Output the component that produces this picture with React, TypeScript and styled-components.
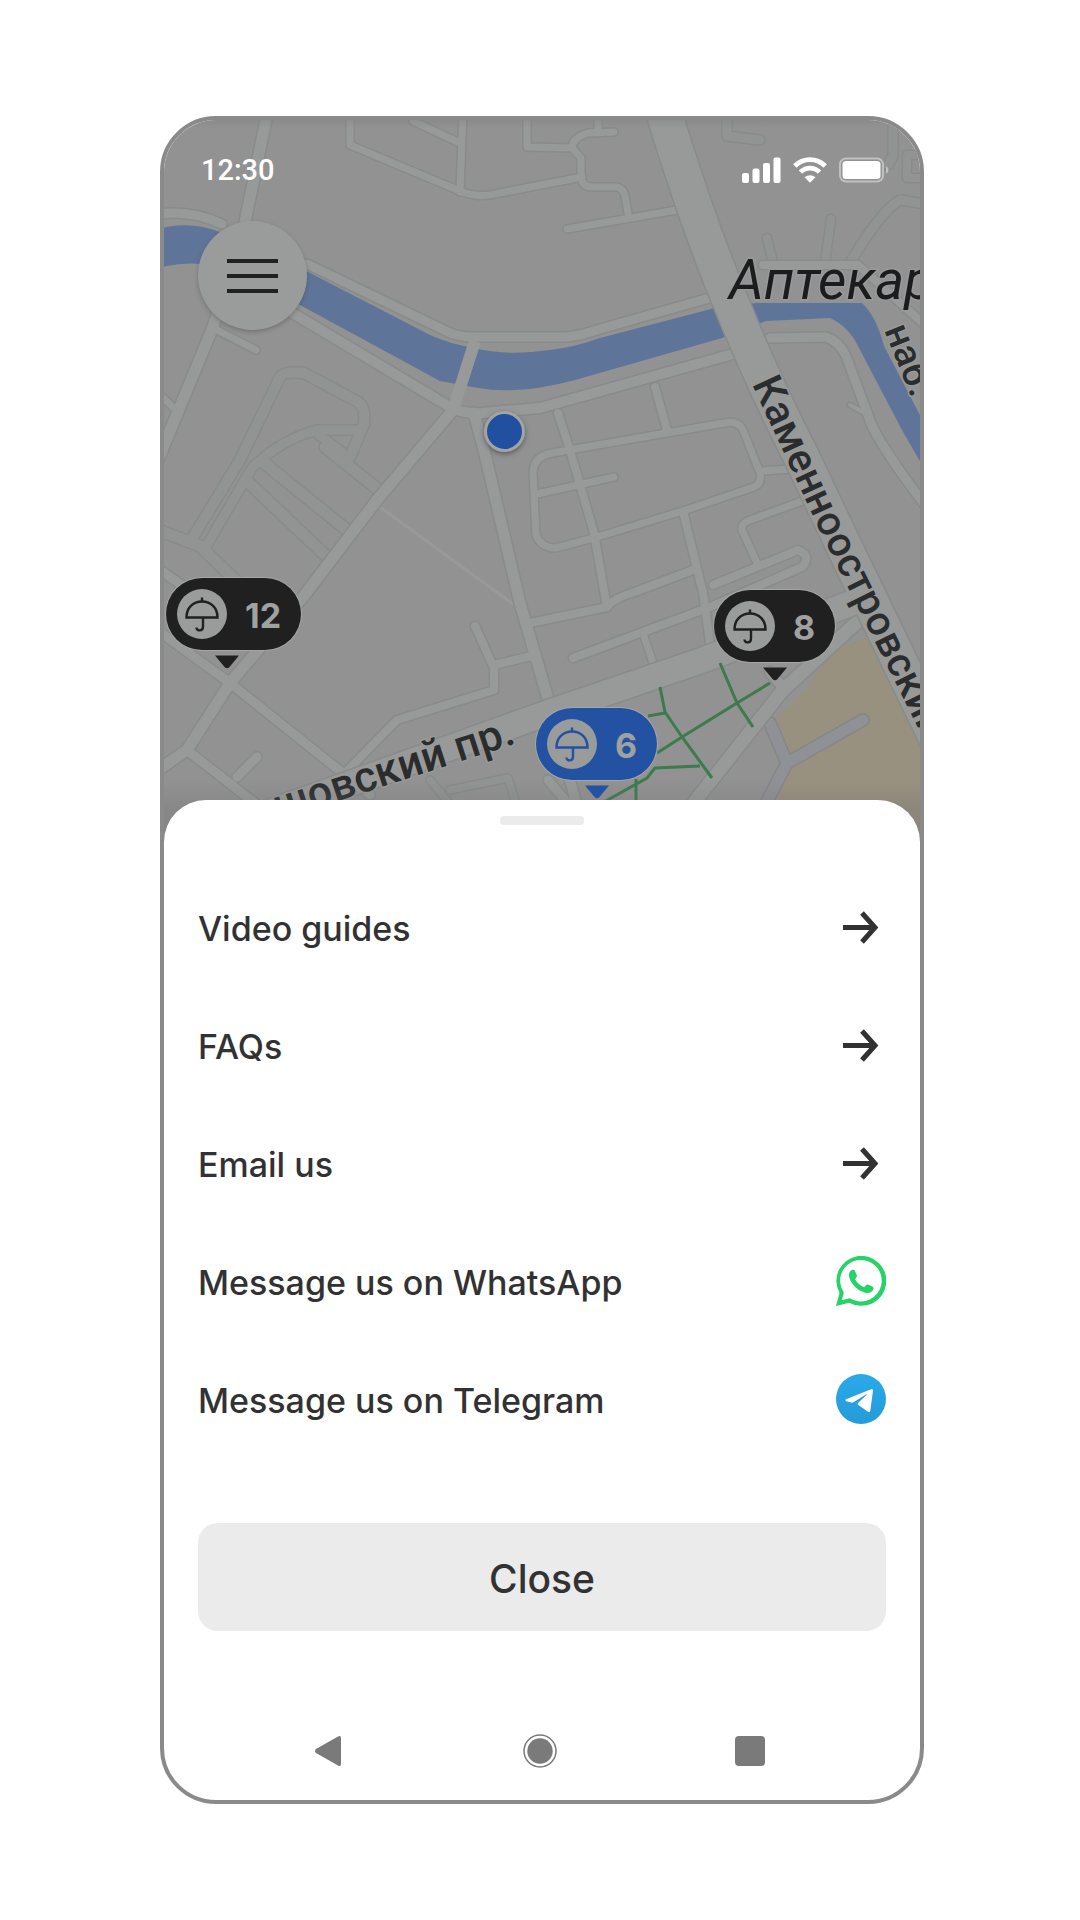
import React from "react";
import styled, { createGlobalStyle } from "styled-components";

const GlobalStyle = createGlobalStyle`
  *, *::before, *::after { box-sizing: border-box; }
  body { margin: 0; background: #fff; }
  button { font: inherit; color: inherit; border: 0; padding: 0; background: none; cursor: pointer; }
  a { color: inherit; text-decoration: none; }
  svg { display: block; }
`;

const Page = styled.main`
  padding: 116px 156px 116px 160px;
  font-family: Inter, "Liberation Sans", sans-serif;
  color: #323233;
`;

const Phone = styled.div`
  display: flex;
  flex-direction: column;
  overflow: hidden;
  border: 4px solid #8a8a8a;
  border-radius: 56px;
  background: #fff;
`;

const MapArea = styled.section`
  position: relative;
  height: 724px;
`;

const MapLayer = styled.div`
  position: absolute;
  inset: 0;
  overflow: hidden;
  background: #919291;
`;

const MapDrawing = styled.svg`
  width: 100%;
  height: 100%;
`;

const MapShade = styled.div`
  position: absolute;
  inset: 0;
  background: linear-gradient(rgba(120, 120, 120, 0.3), transparent 8px, transparent 660px, rgba(110, 110, 110, 0.3) 690px);
`;

const StatusBar = styled.header`
  position: relative;
  display: flex;
  align-items: center;
  justify-content: space-between;
  height: 101px;
  padding: 0 31px 2px 37px;
  color: #fff;
`;

const Time = styled.time`
  font: 500 29px/34px Roboto, "Liberation Sans", sans-serif;
`;

const StatusIcons = styled.div`
  display: flex;
  align-items: center;
  gap: 12px;
`;

const MenuButton = styled.button`
  position: relative;
  display: flex;
  flex-direction: column;
  align-items: center;
  justify-content: center;
  gap: 11px;
  width: 109px;
  height: 109px;
  margin-left: 34px;
  border-radius: 50%;
  background: #9a9b9b;
  box-shadow: 0 2px 4px rgba(60, 60, 60, 0.35);
`;

const MenuLine = styled.span`
  width: 51px;
  height: 4px;
  background: #202121;
`;

const Pin = styled.button<{ $x: number; $y: number; $tone: string }>`
  position: absolute;
  left: ${(p) => p.$x}px;
  top: ${(p) => p.$y}px;
  display: flex;
  align-items: center;
  gap: 18px;
  height: 72px;
  padding: 0 20px 0 11px;
  border-radius: 36px;
  background: ${(p) => p.$tone};
  box-shadow: 0 0 0 1px #a4a5a5;
  color: ${(p) => p.$tone};
`;

const PinIcon = styled.span`
  width: 50px;
  height: 50px;
  border-radius: 50%;
  background: #9a9b9b;
`;

const PinCount = styled.span`
  font-size: 34px;
  font-weight: 700;
  line-height: 40px;
  padding-top: 4px;
  color: #a0a1a1;
`;

const PinTip = styled.svg`
  position: absolute;
  left: 49px;
  top: 77px;
`;

const Position = styled.span`
  position: absolute;
  left: 320px;
  top: 291px;
  width: 41px;
  height: 41px;
  border: 3px solid #a3a4a4;
  border-radius: 50%;
  background: #2150a0;
  box-shadow: 0 2px 5px rgba(40, 40, 40, 0.5);
`;

const Sheet = styled.section`
  position: relative;
  display: flex;
  flex-direction: column;
  margin-top: -44px;
  padding: 16px 34px 0;
  border-radius: 42px 42px 0 0;
  background: #fff;
`;

const Handle = styled.span`
  align-self: center;
  width: 84px;
  height: 9px;
  border-radius: 4px;
  background: #ebebeb;
`;

const Links = styled.nav`
  display: flex;
  flex-direction: column;
  padding: 43px 0 65px;
`;

const LinkRow = styled.a`
  display: flex;
  align-items: center;
  justify-content: space-between;
  height: 118px;
`;

const LinkLabel = styled.span`
  font-size: 34px;
  font-weight: 500;
  line-height: 40px;
  padding-top: 4px;
`;

const CloseButton = styled.button`
  height: 108px;
  border-radius: 20px;
  background: #ebebeb;
  font-size: 39px;
  font-weight: 500;
  line-height: 48px;
  padding-top: 4px;
`;

const SystemBar = styled.footer`
  display: flex;
  align-items: center;
  justify-content: space-between;
  height: 98px;
  margin-top: 71px;
  padding: 0 155px 0 151px;
`;

const SystemButton = styled.button`
  display: block;
`;

type Road = { d: string; w: number };

const roads: Road[] = [
  { d: "M268 110L245 222L213 327L158 460", w: 11 },
  { d: "M350 110V145L460 191Q480 199 500 193L582 177", w: 7 },
  { d: "M413 121L460 143M463 110L460 192", w: 7 },
  { d: "M527 110V147L573 148M614 132L588 133Q572 138 572 148L581 158V178Q583 187 592 187H617Q624 189 625 196L628 213M598 110V132", w: 7 },
  { d: "M567 229L677 210", w: 7 },
  { d: "M158 214Q192 210 222 224M307 264L448 332Q458 337 474 337H566Q580 336 600 329L720 295", w: 9 },
  { d: "M284 308L450 407Q462 414 482 413L540 408L740 352", w: 10 },
  { d: "M770 338L826 337Q840 342 846 356L868 415Q874 438 925 505", w: 9 },
  { d: "M868 415L850 405", w: 4 },
  { d: "M453 410L377 500L303 597L230 683L187 750L158 770", w: 11 },
  { d: "M474 413L484 450L520 603L550 706", w: 11 },
  { d: "M475 626L494 668V690L397 720L347 771M494 665L535 655", w: 8 },
  { d: "M160 570L210 605M160 632L230 683L370 795M187 750L270 815M237 777L257 757M548 780L590 830", w: 9 },
  { d: "M217 330L256 350M160 395L174 408", w: 7 },
  { d: "M536 535L533 472Q534 456 552 453L724 423Q738 420 743 430L760 473Q762 484 754 487L683 511L597 537L556 548Q541 548 536 535", w: 7 },
  { d: "M760 471L792 469M537 494L614 477", w: 7 },
  { d: "M558 413L570 450L594 533L607 607M655 387L667 430M683 511L703 593L711 650", w: 8 },
  { d: "M530 623L607 607Q614 598 632 593L693 570", w: 8 },
  { d: "M573 658L710 607L802 567Q812 556 798 550L713 585", w: 8 },
  { d: "M757 563L742 530Q741 523 750 520L805 500M643 633L656 672", w: 7 },
  { d: "M763 265H858L925 325", w: 8 },
  { d: "M692 805L783 690L830 647L868 612", w: 13 },
  { d: "M770 672L785 690M570 780L578 810", w: 10 },
];

const lanes: Road[] = [
  { d: "M190 542L240 460L280 377Q284 371 304 373L358 402Q366 408 364 424L347 464", w: 10 },
  { d: "M204 550L252 468Q280 440 317 430H360M319 435L342 452", w: 9 },
  { d: "M248 482L325 555M264 463L347 530M325 447L380 491M158 530L200 546L235 580", w: 11 },
  { d: "M727 110V136L760 140M893 110V156L888 165M850 263Q880 212 900 200L925 204", w: 9 },
  { d: "M831 219L825 263M767 238L773 263M915 155H907V178H920", w: 8 },
  { d: "M430 780L455 810M450 790L508 778L515 800", w: 7 },
];

const avenues: Road[] = [
  { d: "M663 110Q700 230 732 305Q762 380 803 460Q850 560 945 755", w: 35 },
  { d: "M262 815L550 712L700 661L865 598", w: 25 },
];

const greenPaths =
  "M720 663L737 703L753 727M770 683L737 703L682 737L657 753M660 687L665 712L682 737L712 778M648 716L665 713M604 802L647 778L655 768L700 766M636 779V810";

function RoadSet({ items, fill }: { items: Road[]; fill: string }) {
  return (
    <g fill="none" strokeLinejoin="round" strokeLinecap="round">
      {items.map((r) => (
        <path key={"c" + r.d} d={r.d} stroke="#888b8b" strokeWidth={r.w + 3} />
      ))}
      {items.map((r) => (
        <path key={"f" + r.d} d={r.d} stroke={fill} strokeWidth={r.w} />
      ))}
    </g>
  );
}

function CityMap() {
  return (
    <MapDrawing viewBox="164 120 756 724" preserveAspectRatio="xMidYMin slice" aria-hidden="true">
      <path d="M870 636L833 650L806 689L770 723L785 757L768 850H930V728L880 640Z" fill="#999180" />
      <g fill="none" strokeLinecap="round" strokeLinejoin="round">
        <path d="M863 720L787 763L760 815M770 723L787 763" stroke="#858685" strokeWidth="14" />
        <path d="M863 720L787 763L760 815M770 723L787 763" stroke="#909196" strokeWidth="11" />
      </g>
      <RoadSet items={lanes} fill="#929494" />
      <path d="M380 507L517 607" stroke="#989999" strokeWidth="3" />
      <path
        d="M158 229Q190 220 220 232L310 273L430 335Q450 344 478 349Q510 356 550 350Q575 347 600 338L715 308L757 303L862 303Q876 316 884 346L925 425V470L902 430L858 346Q848 326 830 318L766 321L722 338L575 380Q520 395 478 388L440 381L300 305L215 266Q190 260 158 268Z"
        fill="#5f7499"
      />
      <RoadSet items={roads} fill="#989a99" />
      <path d="M475 341L453 410" stroke="#989a99" strokeWidth="12" />
      <RoadSet items={avenues} fill="#989a99" />
      <path d={greenPaths} fill="none" stroke="#3c7b4c" strokeWidth="3" />
      <defs>
        <path id="avenue-line" d="M752 384Q780 445 819 529Q860 612 900 692L960 812" />
      </defs>
      <g fontFamily='Roboto, "Noto Sans", sans-serif' fill="#2a2c2d" stroke="#989a99" strokeWidth="3" paintOrder="stroke">
        <text x="729" y="299" fontSize="55" fontStyle="italic" fill="#1a1c1d">
          Аптекарский
        </text>
        <text fontSize="41" fontWeight="500">
          <textPath href="#avenue-line">Каменноостровский</textPath>
        </text>
        <text fontSize="43" fontWeight="500" textAnchor="end" transform="translate(517 743) rotate(-18)">
          Левашовский пр.
        </text>
        <text fontSize="38" fontWeight="500" transform="translate(884 330) rotate(68)">
          наб.
        </text>
      </g>
    </MapDrawing>
  );
}

function Umbrella() {
  return (
    <svg width="50" height="50" viewBox="0 0 50 50" fill="none" stroke="currentColor" strokeWidth="2.4" aria-hidden="true">
      <path d="M9.5 28.5C9.5 19 16 12.5 25 12.5S40.500 19 40.500 28.500Z" />
      <path d="M25 12.500V8.500M26 28.500V37.500C26 42.500 19.500 42.500 19.500 38.500" />
    </svg>
  );
}

function MapPin({ x, y, tone, count }: { x: number; y: number; tone: string; count: number }) {
  return (
    <Pin type="button" $x={x} $y={y} $tone={tone} aria-label={`${count} umbrellas`}>
      <PinIcon>
        <Umbrella />
      </PinIcon>
      <PinCount>{count}</PinCount>
      <PinTip width="24" height="14" viewBox="0 0 24 14" aria-hidden="true">
        <path d="M0 0.500H24L14.500 12Q12 14.500 9.500 12Z" fill={tone} />
      </PinTip>
    </Pin>
  );
}

function Arrow() {
  return (
    <svg width="50" height="50" viewBox="0 0 50 50" fill="none" stroke="#323233" strokeWidth="5" aria-hidden="true">
      <path d="M7 25.500H38M26 11L39 25.500L26 40" />
    </svg>
  );
}

function WhatsApp() {
  return (
    <svg width="50" height="50" viewBox="0 0 50 50" aria-hidden="true">
      <path
        fillRule="evenodd"
        fill="#25d366"
        d="M0 50L3.500 37A25 25 0 1 1 13.200 46.700ZM5.800 44.300L13.700 42.200A20.800 20.800 0 1 0 7.800 36.500Z"
      />
      <path
        fill="#25d366"
        d="M15.200 14.200C16.200 13.400 18.200 13.500 18.800 14.700L20.900 19.300C21.400 20.700 19.800 22.200 19 23.200C21 26.800 24 29.600 28 31.300C29.300 30.300 30.300 28.300 31.800 28.500C33.300 28.800 35.500 30.100 37 31C38.300 31.900 37 34.400 35.700 35.500C33.300 37.400 30.300 37.300 27.300 36.100C20.600 33.500 15.700 28.200 13.500 22.200C12.500 19 12.800 16.100 15.200 14.200Z"
      />
    </svg>
  );
}

function Telegram() {
  return (
    <svg width="50" height="50" viewBox="0 0 50 50" aria-hidden="true">
      <defs>
        <linearGradient id="telegram-sky" x1="0" y1="0" x2="0" y2="1">
          <stop offset="0" stopColor="#2aa9e9" />
          <stop offset="1" stopColor="#259bd9" />
        </linearGradient>
      </defs>
      <circle cx="25" cy="25" r="25" fill="url(#telegram-sky)" />
      <path
        fill="#fff"
        d="M10 25.200L35 15.200Q37.200 14.500 37 16.800L34.300 36.700Q33.800 38.700 32 37.700L22 30.700Q21 29.900 22 28.900L30.500 20.900Q31 20 29.800 20.500L17.500 28.300Q16.500 28.900 15.300 28.600L10.200 27.200Q8.500 26.300 10 25.200Z"
      />
    </svg>
  );
}

const links = [
  { label: "Video guides", icon: <Arrow /> },
  { label: "FAQs", icon: <Arrow /> },
  { label: "Email us", icon: <Arrow /> },
  { label: "Message us on WhatsApp", icon: <WhatsApp /> },
  { label: "Message us on Telegram", icon: <Telegram /> },
];

export default function App() {
  return (
    <Page>
      <GlobalStyle />
      <Phone>
        <MapArea>
          <MapLayer>
            <CityMap />
            <MapShade />
          </MapLayer>
          <StatusBar>
            <Time>12:30</Time>
            <StatusIcons>
              <svg width="39" height="26" viewBox="0 0 39 26" fill="#fff" aria-hidden="true">
                <rect x="0" y="16" width="7" height="10" rx="2" />
                <rect x="10.500" y="11.500" width="7" height="14.500" rx="2" />
                <rect x="21" y="6" width="7" height="20" rx="2" />
                <rect x="31.500" y="0.500" width="7" height="25.500" rx="2" />
              </svg>
              <svg width="34" height="26" viewBox="0 0 34 26" fill="none" stroke="#fff" strokeWidth="4.800" aria-hidden="true">
                <path d="M1.800 9A21.500 21.500 0 0 1 32.200 9" />
                <path d="M7.500 15.200A13.200 13.200 0 0 1 26.500 15.200" />
                <path d="M11.500 20.300Q17 16.200 22.500 20.300L17 25.800Z" fill="#fff" stroke="none" />
              </svg>
              <svg width="50" height="26" viewBox="0 0 50 26" aria-hidden="true">
                <rect x="1" y="1.500" width="43" height="23" rx="6" fill="none" stroke="#c0c0c0" strokeWidth="2" />
                <rect x="3.500" y="4" width="38" height="18" rx="3.500" fill="#fff" />
                <path d="M47 9Q49.500 10.500 49.500 13T47 17Z" fill="#c0c0c0" />
              </svg>
            </StatusIcons>
          </StatusBar>
          <MenuButton type="button" aria-label="Menu">
            <MenuLine />
            <MenuLine />
            <MenuLine />
          </MenuButton>
          <Position />
          <MapPin x={2} y={458} tone="#202020" count={12} />
          <MapPin x={550} y={470} tone="#202020" count={8} />
          <MapPin x={372} y={588} tone="#2452a3" count={6} />
        </MapArea>
        <Sheet>
          <Handle />
          <Links>
            {links.map((l) => (
              <LinkRow key={l.label} href="#">
                <LinkLabel>{l.label}</LinkLabel>
                {l.icon}
              </LinkRow>
            ))}
          </Links>
          <CloseButton type="button">Close</CloseButton>
        </Sheet>
        <SystemBar>
          <SystemButton type="button" aria-label="Back">
            <svg width="30" height="32" viewBox="0 0 30 32" fill="#7a7a7a" aria-hidden="true">
              <path d="M23 1.500Q26 0 26 3V29Q26 32 23 30.500L1 18Q-1 16 1 14Z" />
            </svg>
          </SystemButton>
          <SystemButton type="button" aria-label="Home">
            <svg width="34" height="34" viewBox="0 0 34 34" aria-hidden="true">
              <circle cx="17" cy="17" r="16" fill="none" stroke="#7a7a7a" strokeWidth="1.500" />
              <circle cx="17" cy="17" r="12.700" fill="#7a7a7a" />
            </svg>
          </SystemButton>
          <SystemButton type="button" aria-label="Recent apps">
            <svg width="30" height="30" viewBox="0 0 30 30" fill="#7a7a7a" aria-hidden="true">
              <rect width="30" height="30" rx="4" />
            </svg>
          </SystemButton>
        </SystemBar>
      </Phone>
    </Page>
  );
}
